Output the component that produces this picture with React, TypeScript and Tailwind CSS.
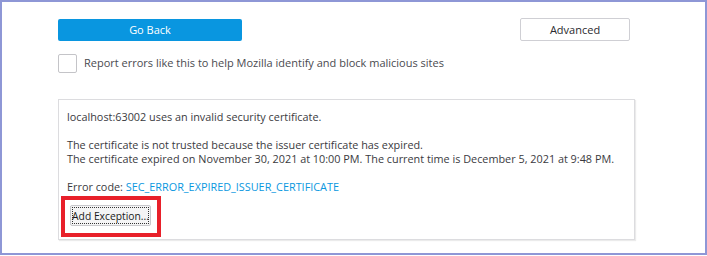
import React from "react";

const App = () => {
  return (
    <div className="h-[256px] w-[707px] bg-white font-['Open_Sans',sans-serif]">
      <div className="h-[255px] w-[707px] border-2 border-[#8e97d6] bg-white pl-[56px] pt-[16px]">
        <div className="flex w-[574px] items-center justify-between">
          <button
            type="button"
            className="h-[22px] w-[184px] rounded-[2px] bg-[#0996e0] text-[11px] leading-none text-white"
          >
            Go Back
          </button>
          <button
            type="button"
            className="mr-[2px] h-[23px] w-[110px] rounded-[2px] border border-[#cfcfd4] bg-white text-[11px] leading-none text-[#2a2a2e]"
          >
            Advanced
          </button>
        </div>
        <label className="mt-[13px] flex items-center gap-[7px]">
          <span className="h-[19px] w-[19px] rounded-[2px] border border-[#c4c4c8] bg-white" />
          <span className="text-[11px] text-[#4a4a4f]">
            Report errors like this to help Mozilla identify and block malicious sites
          </span>
        </label>
        <div className="relative mt-[26px] h-[141px] w-[577px] border border-[#dcdcdf] bg-white px-[8px] pt-[10px] text-[10.85px] leading-[14px] text-[#3a3a3e] shadow-[1px_1px_1px_rgba(0,0,0,0.08)]">
          <p>localhost:63002 uses an invalid security certificate.</p>
          <p className="mt-[14px]">
            The certificate is not trusted because the issuer certificate has expired.
          </p>
          <p>
            The certificate expired on November 30, 2021 at 10:00 PM. The current time is
            December 5, 2021 at 9:48 PM.
          </p>
          <p className="mt-[14px]">
            Error code: <span className="text-[#0a97e0]">SEC_ERROR_EXPIRED_ISSUER_CERTIFICATE</span>
          </p>
          <button
            type="button"
            className="ml-[3px] mt-[11px] flex h-[21px] w-[81px] items-center justify-center rounded-[2px] border border-[#c8c8cc] bg-[#f4f4f5] p-[1px]"
          >
            <span className="flex h-full w-full items-center justify-center whitespace-nowrap border border-dotted border-[#333] text-[10.3px] text-[#1a1a1a]">
              Add Exception...
            </span>
          </button>
          <div className="absolute left-[2px] top-[96px] h-[41px] w-[100px] border-4 border-[#e8202a]" />
        </div>
      </div>
    </div>
  );
};

export default App;
